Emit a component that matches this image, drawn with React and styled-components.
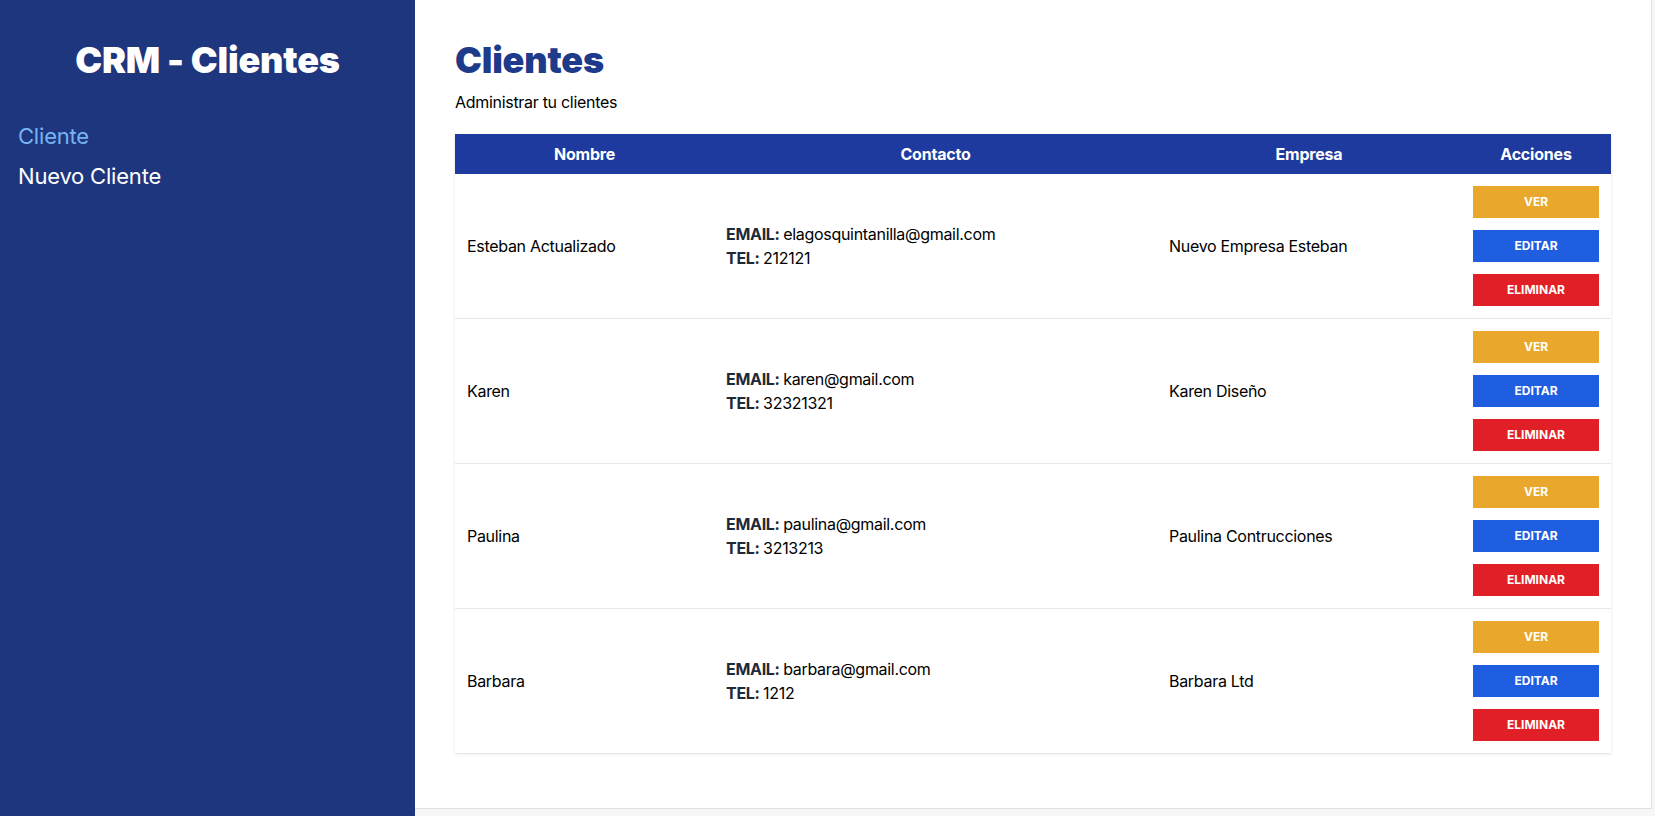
import React from "react";
import styled, { createGlobalStyle } from "styled-components";

const Global = createGlobalStyle`
  *, *::before, *::after { box-sizing: border-box; }
  html, body { margin: 0; padding: 0; }
  body {
    font-family: Inter, "Noto Sans", "Liberation Sans", sans-serif;
    color: #000;
    background: #fff;
  }
`;

const Layout = styled.div`
  display: flex;
  min-height: 100vh;
  height: 816px;
`;

const Sidebar = styled.aside`
  flex: 0 0 415px;
  background: #1e367e;
  padding: 40px 18px;
`;

const Brand = styled.h2`
  margin: 0;
  font-size: 36px;
  line-height: 40px;
  font-weight: 900;
  color: #fff;
  text-align: center;
  letter-spacing: -0.2px;
`;

const Nav = styled.nav`
  margin-top: 41px;
  display: flex;
  flex-direction: column;
  gap: 10px;
`;

const NavLink = styled.a`
  display: block;
  font-size: 22px;
  line-height: 30px;
  color: ${(p) => (p.$active ? "#76b4f2" : "#fff")};
  text-decoration: none;
  letter-spacing: -0.2px;
`;

const Main = styled.main`
  flex: 1;
  display: flex;
  background: #f6f6f6;
  padding: 0 3px 7px 0;
`;

const Scroller = styled.div`
  flex: 1;
  background: #fff;
  border-right: 1px solid #e1e1e1;
  border-bottom: 1px solid #e1e1e1;
  padding: 40px;
`;

const Title = styled.h2`
  margin: 0;
  font-size: 36px;
  line-height: 40px;
  font-weight: 900;
  color: #1e3a8a;
  letter-spacing: -0.2px;
`;

const Subtitle = styled.p`
  margin: 10px 0 0;
  font-size: 16px;
  line-height: 24px;
  letter-spacing: -0.3px;
`;

const Table = styled.table`
  margin-top: 20px;
  width: 100%;
  table-layout: fixed;
  border-collapse: collapse;
  box-shadow: 0 1px 3px 0 rgba(0, 0, 0, 0.1), 0 1px 2px -1px rgba(0, 0, 0, 0.1);
`;

const Head = styled.thead`
  background: #1e3a9e;
`;

const Th = styled.th`
  padding: 8px 0;
  font-size: 16px;
  line-height: 24px;
  font-weight: 700;
  color: #fff;
  text-align: center;
  letter-spacing: -0.2px;
`;

const Row = styled.tr`
  border-bottom: 1px solid #e5e7eb;
  &:last-child { border-bottom: none; }
`;

const Td = styled.td`
  padding: 12px;
  font-size: 16px;
  line-height: 24px;
  vertical-align: middle;
  letter-spacing: -0.3px;
`;

const Label = styled.span`
  font-weight: 700;
  color: #1f2937;
`;

const ActionButton = styled.button`
  display: block;
  width: 100%;
  border: none;
  padding: 8px 0;
  margin: 0 0 12px;
  font-family: inherit;
  font-size: 12px;
  line-height: 16px;
  font-weight: 700;
  text-transform: uppercase;
  color: #fff;
  cursor: pointer;
  background: ${(p) =>
    p.$variant === "ver" ? "#e9a82c" : p.$variant === "editar" ? "#1f5de1" : "#e11f27"};
  &:last-child { margin-bottom: 0; }
`;

const clientes = [
  { nombre: "Esteban Actualizado", email: "elagosquintanilla@gmail.com", tel: "212121", empresa: "Nuevo Empresa Esteban" },
  { nombre: "Karen", email: "karen@gmail.com", tel: "32321321", empresa: "Karen Diseño" },
  { nombre: "Paulina", email: "paulina@gmail.com", tel: "3213213", empresa: "Paulina Contrucciones" },
  { nombre: "Barbara", email: "barbara@gmail.com", tel: "1212", empresa: "Barbara Ltd" },
];

export default function App() {
  return (
    <>
      <Global />
      <Layout>
        <Sidebar>
          <Brand>CRM - Clientes</Brand>
          <Nav>
            <NavLink href="#" $active>Cliente</NavLink>
            <NavLink href="#">Nuevo Cliente</NavLink>
          </Nav>
        </Sidebar>
        <Main>
          <Scroller>
            <Title>Clientes</Title>
            <Subtitle>Administrar tu clientes</Subtitle>
            <Table>
              <colgroup>
                <col style={{ width: "259px" }} />
                <col style={{ width: "443px" }} />
                <col style={{ width: "304px" }} />
                <col style={{ width: "150px" }} />
              </colgroup>
              <Head>
                <tr>
                  <Th>Nombre</Th>
                  <Th>Contacto</Th>
                  <Th>Empresa</Th>
                  <Th>Acciones</Th>
                </tr>
              </Head>
              <tbody>
                {clientes.map((c) => (
                  <Row key={c.nombre}>
                    <Td>{c.nombre}</Td>
                    <Td>
                      <div><Label>EMAIL: </Label>{c.email}</div>
                      <div><Label>TEL: </Label>{c.tel}</div>
                    </Td>
                    <Td>{c.empresa}</Td>
                    <Td>
                      <ActionButton $variant="ver">Ver</ActionButton>
                      <ActionButton $variant="editar">Editar</ActionButton>
                      <ActionButton $variant="eliminar">Eliminar</ActionButton>
                    </Td>
                  </Row>
                ))}
              </tbody>
            </Table>
          </Scroller>
        </Main>
      </Layout>
    </>
  );
}
